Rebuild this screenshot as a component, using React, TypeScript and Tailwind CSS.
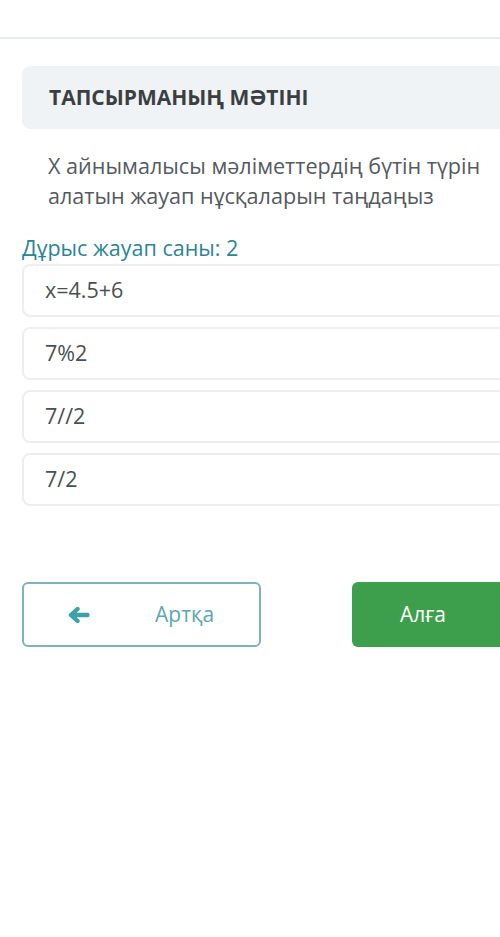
const options = ['x=4.5+6', '7%2', '7//2', '7/2'];

function BackArrow() {
  return (
    <svg viewBox="0 0 22 16" className="h-[16px] w-[22px]" fill="none">
      <path
        d="M3 8 L9.5 2 M3 8 L9.5 14 M3.5 8 H19.5"
        stroke="#3ca2a9"
        strokeWidth="4.4"
        strokeLinecap="round"
        strokeLinejoin="round"
      />
    </svg>
  );
}

export default function App() {
  return (
    <div
      className="h-[937px] w-[500px] overflow-hidden bg-white"
      style={{ fontFamily: '"Open Sans", "Noto Sans", sans-serif' }}
    >
      {/* top bar */}
      <div className="h-[39px] border-b-2 border-[#e9ecee]" />

      <div className="ml-[22px] w-[510px] pt-[27px]">
        {/* Task header */}
        <div className="flex h-[63px] items-center rounded-lg bg-[#f0f3f5] pl-[27px]">
          <h2 className="text-[21px] font-bold text-[#3b3f42]">ТАПСЫРМАНЫҢ МӘТІНІ</h2>
        </div>

        {/* Question */}
        <p className="mt-[22px] pl-[26px] pr-[28px] text-[21.6px] leading-[30px] text-[#555a5e]">
          Х айнымалысы мәліметтердің бүтін түрін алатын жауап нұсқаларын таңдаңыз
        </p>

        <div className="mt-[23px] text-[21.5px] leading-[28px] text-[#2b8597]">
          Дұрыс жауап саны: 2
        </div>

        {/* Options */}
        <div className="mt-[2px] flex flex-col gap-[10px]">
          {options.map((opt) => (
            <div
              key={opt}
              className="flex h-[53px] items-center rounded-lg border-2 border-[#eceeef] pl-[21px] text-[21.5px] text-[#4b4f52]"
            >
              {opt}
            </div>
          ))}
        </div>

        {/* Navigation */}
        <div className="mt-[76px] flex items-center gap-[91px]">
          <button className="flex h-[65px] w-[239px] items-center rounded-md border-2 border-[#7fb3ba] pl-[44px] text-[#5ba7b0]">
            <BackArrow />
            <span className="ml-[65px] text-[21px]">Артқа</span>
          </button>
          <button className="flex h-[65px] w-[170px] items-center rounded-md bg-[#3d9f4b] pl-[48px] text-[21px] text-white">
            Алға
          </button>
        </div>
      </div>
    </div>
  );
}
